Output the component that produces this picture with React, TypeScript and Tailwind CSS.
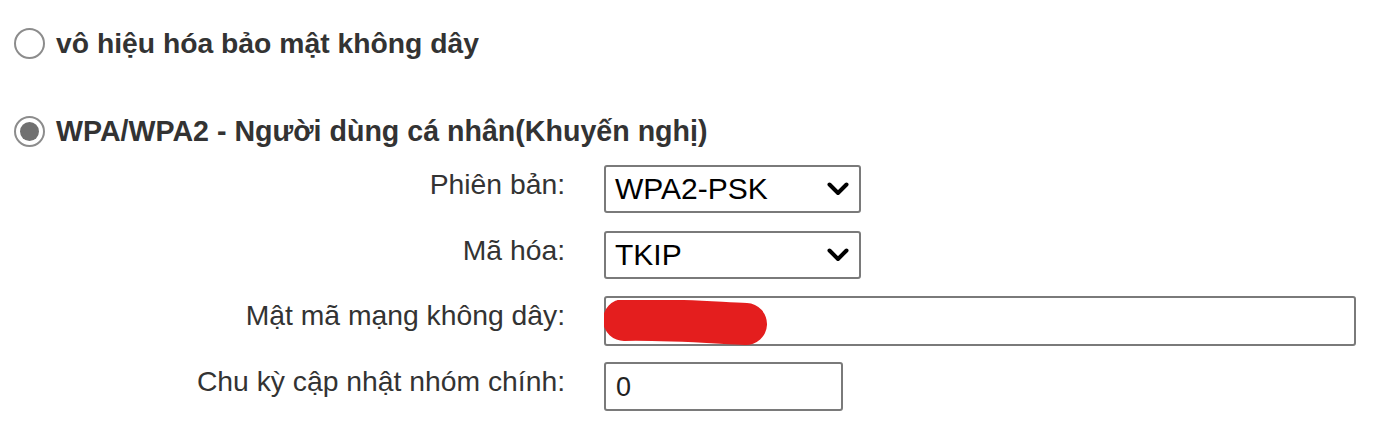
// Cài đặt bảo mật không dây — ảnh chụp trang router, phóng to 2x.

const FONT = "font-['Liberation_Sans',Arial,sans-serif]";

function Radio({ checked }: { checked?: boolean }) {
  return (
    <span className="flex h-[31px] w-[31px] shrink-0 items-center justify-center rounded-full border-2 border-[#8c8c8c] bg-white">
      {checked ? <span className="h-[19px] w-[19px] rounded-full bg-[#707070]" /> : null}
    </span>
  );
}

function Chevron() {
  return (
    <svg width="22" height="14" viewBox="0 0 22 14" className="shrink-0">
      <path d="M2.5 2.5 L11 11 L19.5 2.5" fill="none" stroke="#000" strokeWidth="4" strokeLinecap="round" strokeLinejoin="round" />
    </svg>
  );
}

function Select({ value }: { value: string }) {
  return (
    <div className="flex h-[48px] w-[257px] items-center justify-between rounded-[3px] border-2 border-[#7a7a7a] bg-white pl-[9px] pr-[10px]">
      <span className="text-[30px] leading-[32px] text-black">{value}</span>
      <Chevron />
    </div>
  );
}

const ROWS = [
  { label: "Phiên bản:", mt: "mt-[18px]" },
  { label: "Mã hóa:", mt: "mt-[18px]" },
  { label: "Mật mã mạng không dây:", mt: "mt-[17px]" },
  { label: "Chu kỳ cập nhật nhóm chính:", mt: "mt-[16px]" },
];

function Row({ label, mt, children }: { label: string; mt: string; children: React.ReactNode }) {
  return (
    <div className={`flex items-start gap-[39px] ${mt}`}>
      <div className="w-[565px] shrink-0 pt-[3px] text-right text-[28.3px] leading-[32px] text-[#333]">
        {label}
      </div>
      {children}
    </div>
  );
}

export default function App() {
  return (
    <div className={`h-[430px] w-[1374px] overflow-hidden bg-white ${FONT}`}>
      <div className="pt-[27px]">
        <label className="flex h-[32px] items-center gap-[11px] pl-[14px]">
          <Radio />
          <span className="text-[28.3px] font-bold leading-[32px] text-[#333]">vô hiệu hóa bảo mật không dây</span>
        </label>
        <label className="mt-[56px] flex h-[32px] items-center gap-[11px] pl-[14px]">
          <Radio checked />
          <span className="text-[28.6px] font-bold leading-[32px] text-[#333]">
            WPA/WPA2 - Người dùng cá nhân(Khuyến nghị)
          </span>
        </label>

        <Row {...ROWS[0]}>
          <Select value="WPA2-PSK" />
        </Row>
        <Row {...ROWS[1]}>
          <Select value="TKIP" />
        </Row>
        <Row {...ROWS[2]}>
          <div className="relative h-[50px] w-[752px] rounded-[3px] border-2 border-[#7a7a7a] bg-white">
            {/* vệt đỏ che mật khẩu */}
            <svg className="absolute left-[-2px] top-[2px]" width="165" height="46" viewBox="0 0 165 46">
              <path d="M20 20 C 55 19, 100 22, 142 24" fill="none" stroke="#e41e1e" strokeWidth="42" strokeLinecap="round" />
            </svg>
          </div>
        </Row>
        <Row {...ROWS[3]}>
          <div className="flex h-[49px] w-[239px] items-center rounded-[3px] border-2 border-[#7a7a7a] bg-white pl-[10px]">
            <span className="text-[27px] leading-[32px] text-[#222]">0</span>
          </div>
        </Row>
      </div>
    </div>
  );
}
